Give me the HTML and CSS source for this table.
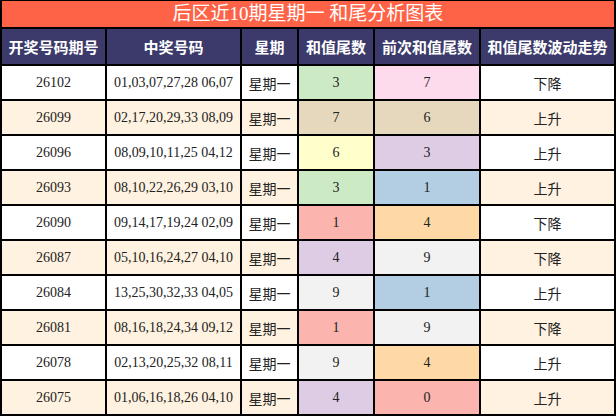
FILE: index.html
```html
<!DOCTYPE html>
<html lang="zh-CN">
<head>
<meta charset="utf-8">
<link rel="stylesheet" href="styles.css">
</head>
<body>
<div class="chart">
  <div class="title">后区近10期星期一 和尾分析图表</div>
  <div class="grid">
    <div class="h">开奖号码期号</div><div class="h">中奖号码</div><div class="h">星期</div><div class="h">和值尾数</div><div class="h">前次和值尾数</div><div class="h">和值尾数波动走势</div>

    <div class="c">26102</div><div class="c">01,03,07,27,28 06,07</div><div class="c cn">星期一</div><div class="c green">3</div><div class="c pink">7</div><div class="c cn">下降</div>
    <div class="c e">26099</div><div class="c e">02,17,20,29,33 08,09</div><div class="c e cn">星期一</div><div class="c tan">7</div><div class="c tan">6</div><div class="c e cn">上升</div>
    <div class="c">26096</div><div class="c">08,09,10,11,25 04,12</div><div class="c cn">星期一</div><div class="c yellow">6</div><div class="c lav">3</div><div class="c cn">上升</div>
    <div class="c e">26093</div><div class="c e">08,10,22,26,29 03,10</div><div class="c e cn">星期一</div><div class="c green">3</div><div class="c blue">1</div><div class="c e cn">上升</div>
    <div class="c">26090</div><div class="c">09,14,17,19,24 02,09</div><div class="c cn">星期一</div><div class="c salmon">1</div><div class="c orange">4</div><div class="c cn">下降</div>
    <div class="c e">26087</div><div class="c e">05,10,16,24,27 04,10</div><div class="c e cn">星期一</div><div class="c lav">4</div><div class="c grey">9</div><div class="c e cn">下降</div>
    <div class="c">26084</div><div class="c">13,25,30,32,33 04,05</div><div class="c cn">星期一</div><div class="c grey">9</div><div class="c blue">1</div><div class="c cn">上升</div>
    <div class="c e">26081</div><div class="c e">08,16,18,24,34 09,12</div><div class="c e cn">星期一</div><div class="c salmon">1</div><div class="c grey">9</div><div class="c e cn">下降</div>
    <div class="c">26078</div><div class="c">02,13,20,25,32 08,11</div><div class="c cn">星期一</div><div class="c grey">9</div><div class="c orange">4</div><div class="c cn">上升</div>
    <div class="c e">26075</div><div class="c e">01,06,16,18,26 04,10</div><div class="c e cn">星期一</div><div class="c lav">4</div><div class="c salmon">0</div><div class="c e cn">上升</div>
  </div>
</div>
</body>
</html>
```
FILE: styles.css
```css
html, body {
  margin: 0;
  padding: 0;
  background: #ffffff;
}
.chart {
  width: 616px;
  box-sizing: border-box;
  border-left: 2px solid #000000;
  border-top: 1px solid #000000;
  font-family: "Liberation Serif", "Noto Sans CJK SC", serif;
  color: #222222;
}
.title {
  height: 26px;
  line-height: 26px;
  background: #ff6347;
  color: #ffffff;
  text-align: center;
  font-family: "Liberation Serif", "Noto Sans CJK SC", sans-serif;
  font-size: 19px;
  border-right: 2px solid #000000;
  border-bottom: 2px solid #000000;
}
.grid {
  display: grid;
  grid-template-columns: 105px 135px 57px 76px 106px 135px;
  grid-template-rows: 37px repeat(10, 35px);
}
.h, .c {
  display: flex;
  align-items: center;
  justify-content: center;
  border-right: 2px solid #000000;
  border-bottom: 2px solid #000000;
  white-space: nowrap;
}
.h {
  background: #3b3a6b;
  color: #ffffff;
  font-family: "Noto Sans CJK SC", sans-serif;
  font-weight: bold;
  font-size: 15px;
}
.c {
  background: #ffffff;
  font-size: 14px;
}
.c.e { background: #fff2e0; }
.c.cn {
  font-family: "Noto Sans CJK SC", sans-serif;
  font-size: 14px;
}
.c.green { background: #ccebc5; }
.c.pink { background: #fddaec; }
.c.tan { background: #e5d8bd; }
.c.yellow { background: #ffffcc; }
.c.lav { background: #decbe4; }
.c.blue { background: #b3cde3; }
.c.salmon { background: #fbb4ae; }
.c.orange { background: #fed9a6; }
.c.grey { background: #f2f2f2; }
```
